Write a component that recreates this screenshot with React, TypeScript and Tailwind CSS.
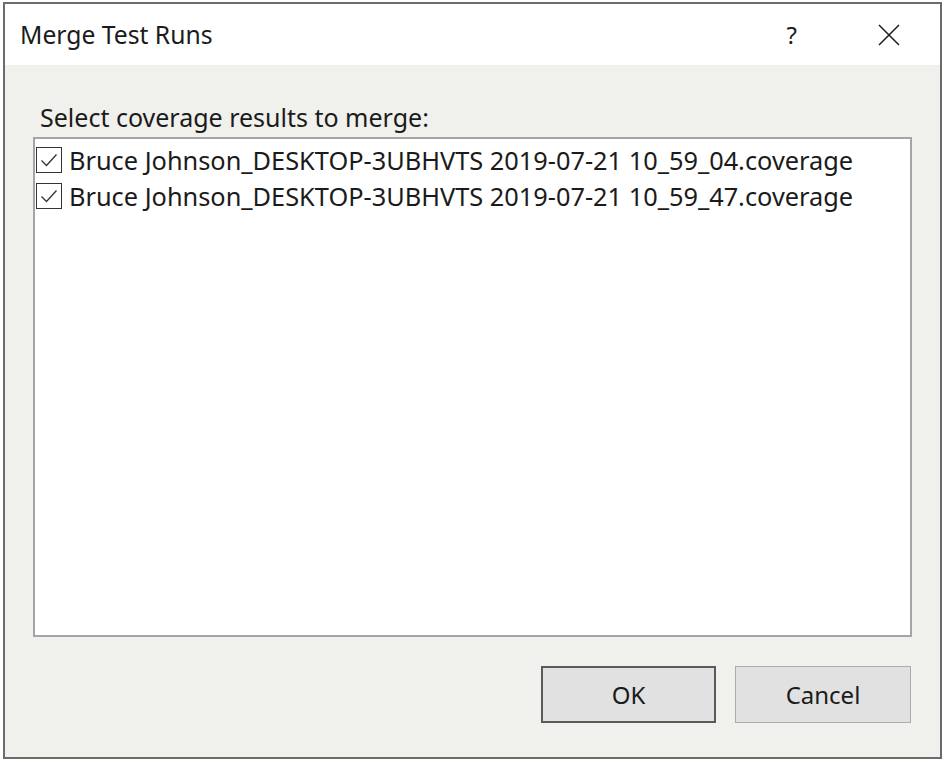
import { useState } from "react";

const files = [
  "Bruce Johnson_DESKTOP-3UBHVTS 2019-07-21 10_59_04.coverage",
  "Bruce Johnson_DESKTOP-3UBHVTS 2019-07-21 10_59_47.coverage",
];

function CheckBox({ checked }: { checked: boolean }) {
  return (
    <span className="flex h-[26px] w-[26px] shrink-0 items-center justify-center border-[1.5px] border-[#333] bg-white">
      {checked && (
        <svg width="20" height="20" viewBox="0 0 20 20" fill="none">
          <path d="M2.5 10.5 L7.5 15.5 L17.5 4.5" stroke="#333" strokeWidth="1.3" />
        </svg>
      )}
    </span>
  );
}

export default function App() {
  const [sel, setSel] = useState([true, true]);

  return (
    <div className="min-h-screen bg-white pl-[3px] pt-[2px]" style={{ fontFamily: '"Noto Sans", "Open Sans", sans-serif' }}>
      <div className="flex h-[757px] w-[939px] flex-col border-2 border-[#6b6b6b]">
        {/* title bar */}
        <div className="flex h-[61px] items-center bg-white pl-[15px] text-[#1b1b1b]">
          <span className="text-[24.7px] leading-[32px]">Merge Test Runs</span>
          <span className="ml-auto mr-[81px] text-[24px] leading-[32px]">?</span>
          <svg className="mr-[40px]" width="22" height="22" viewBox="0 0 22 22">
            <path d="M1 1 L21 21 M21 1 L1 21" stroke="#1b1b1b" strokeWidth="1.5" />
          </svg>
        </div>

        {/* body */}
        <div className="flex flex-1 flex-col bg-[#f0f0ed] px-[28px] pt-[37px] text-[#1b1b1b]">
          <div className="pl-[7px] text-[25px] leading-[30px]">Select coverage results to merge:</div>

          <div className="mt-[5px] h-[500px] border-2 border-[#a5a5a5] bg-white pt-[3px]">
            {files.map((f, i) => (
              <div
                key={f}
                className="flex h-[36px] cursor-default items-center gap-[7px] pl-[1px]"
                onClick={() => setSel(sel.map((s, j) => (j === i ? !s : s)))}
              >
                <CheckBox checked={sel[i]} />
                <span className="text-[25.35px] leading-[32px]">{f}</span>
              </div>
            ))}
          </div>

          <div className="mt-[29px] flex justify-end gap-[19px] pr-[1px]">
            <button className="h-[57px] w-[175px] border-2 border-[#5a5a5a] bg-[#e1e1e1] text-[24px] text-[#1b1b1b]">
              OK
            </button>
            <button className="h-[57px] w-[176px] border border-[#adadad] bg-[#e1e1e1] text-[24px] text-[#1b1b1b]">
              Cancel
            </button>
          </div>
        </div>
      </div>
    </div>
  );
}
